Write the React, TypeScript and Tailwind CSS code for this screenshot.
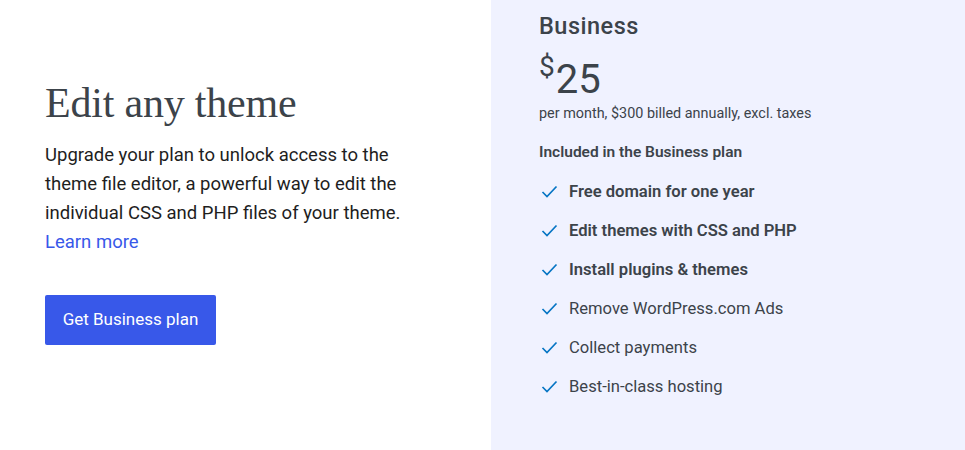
import React from "react";

const features: { text: string; bold: boolean }[] = [
  { text: "Free domain for one year", bold: true },
  { text: "Edit themes with CSS and PHP", bold: true },
  { text: "Install plugins & themes", bold: true },
  { text: "Remove WordPress.com Ads", bold: false },
  { text: "Collect payments", bold: false },
  { text: "Best-in-class hosting", bold: false },
];

function Check() {
  return (
    <svg width="17" height="14" viewBox="0 0 17 14" className="shrink-0">
      <polyline
        points="1.5,7 6,11.5 15.5,1.5"
        fill="none"
        stroke="#0675c4"
        strokeWidth="1.7"
      />
    </svg>
  );
}

export default function App() {
  return (
    <div
      className="flex h-[450px] w-[965px] bg-white text-[#1e1e1e] overflow-hidden"
      style={{ fontFamily: "Roboto, 'Liberation Sans', sans-serif" }}
    >
      <div className="w-[491px] shrink-0 pl-[45px] pt-[78px]">
        <h1
          className="text-[42px] leading-[50px] text-[#3c434a] tracking-[-0.2px]"
          style={{ fontFamily: "'Liberation Serif', 'DejaVu Serif', serif" }}
        >
          Edit any theme
        </h1>
        <p className="mt-[13px] text-[18.5px] leading-[29px] text-[#1e1e1e]">
          Upgrade your plan to unlock access to the
          <br />
          theme file editor, a powerful way to edit the
          <br />
          individual CSS and PHP files of your theme.
          <br />
          <a className="text-[#3858e9]">Learn more</a>
        </p>
        <button className="mt-[38px] h-[50px] w-[171px] rounded-[2px] bg-[#3858e9] text-white text-[17px]">
          Get Business plan
        </button>
      </div>
      <div className="flex-1 bg-[#f0f2ff] pl-[48px] pt-[12px]">
        <div className="text-[23.5px] leading-[28px] font-medium text-[#3c434a] tracking-[0.5px]">
          Business
        </div>
        <div className="mt-[16px] flex items-start text-[#3c434a]">
          <span className="text-[28px] leading-[30px] -mt-[4px] mr-[1px]">$</span>
          <span className="text-[40px] leading-[44px] mt-[2px]">25</span>
        </div>
        <div className="mt-[2px] text-[14.4px] leading-[20px] text-[#3c434a]">
          per month, $300 billed annually, excl. taxes
        </div>
        <div className="mt-[18px] text-[15.5px] leading-[20px] font-semibold text-[#3c434a]">
          Included in the Business plan
        </div>
        <ul className="mt-[18px] flex flex-col gap-[15px]">
          {features.map((f) => (
            <li key={f.text} className="flex items-center gap-[11px] h-[24px] pl-[2px]">
              <Check />
              <span
                className={
                  "text-[16.6px] leading-[24px] text-[#3c434a] " +
                  (f.bold ? "font-semibold" : "font-normal")
                }
              >
                {f.text}
              </span>
            </li>
          ))}
        </ul>
      </div>
    </div>
  );
}
